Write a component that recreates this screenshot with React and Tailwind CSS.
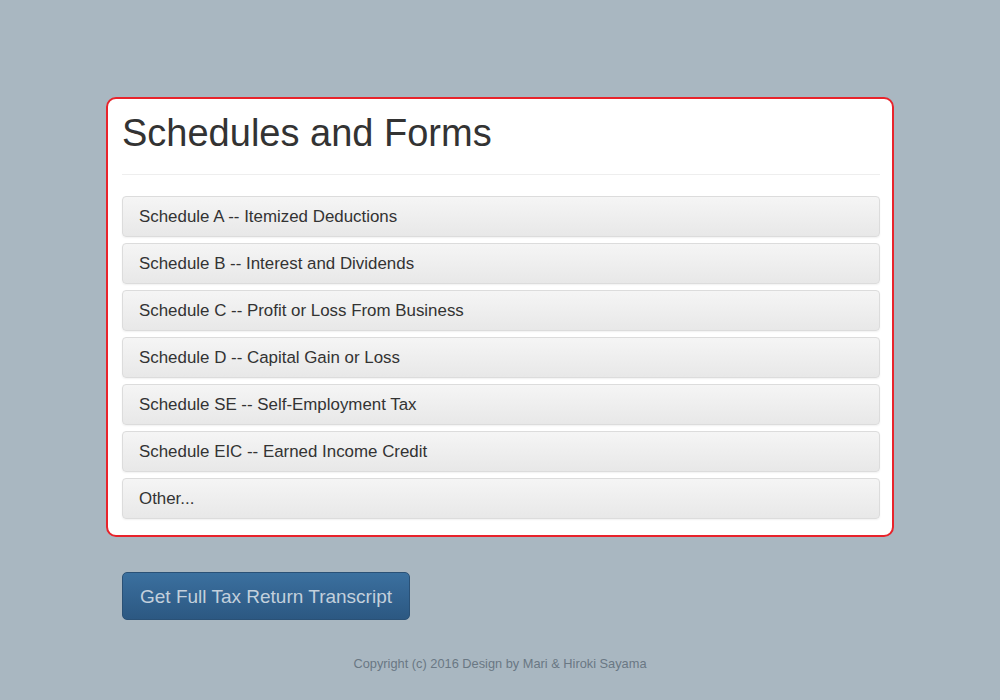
export default function App() {
  const items = [
    "Schedule A -- Itemized Deductions",
    "Schedule B -- Interest and Dividends",
    "Schedule C -- Profit or Loss From Business",
    "Schedule D -- Capital Gain or Loss",
    "Schedule SE -- Self-Employment Tax",
    "Schedule EIC -- Earned Income Credit",
    "Other...",
  ];
  return (
    <div
      className="min-h-[700px] w-full bg-[#a9b7c1] pt-[97px]"
      style={{ fontFamily: '"Liberation Sans", Arial, sans-serif' }}
    >
      <div className="mx-auto w-[788px]">
        <div className="rounded-[10px] border-2 border-[#e8232b] bg-white pl-[14px] pr-[12px] pt-[13px] pb-[16px]">
          <h1 className="text-[38px] leading-[42px] text-[#333333]">Schedules and Forms</h1>
          <div className="mt-[20px] h-px bg-[#eeeeee]" />
          <div className="mt-[21px] flex flex-col gap-[6px]">
            {items.map((t) => (
              <div
                key={t}
                className="flex h-[41px] items-center rounded-[4px] border border-[#dcdcdc] bg-gradient-to-b from-[#f5f5f5] to-[#e8e8e8] pl-[16px] text-[16.9px] text-[#333333] shadow-[0_1px_2px_rgba(0,0,0,0.06)]"
              >
                {t}
              </div>
            ))}
          </div>
        </div>
        <div className="mt-[35px] pl-[16px]">
          <button className="flex h-[48px] w-[288px] items-center justify-center rounded-[5px] border border-[#2a5176] bg-gradient-to-b from-[#3b709f] to-[#2c5882] pt-[3px] text-[19px] text-[#c3d0dc]">
            Get Full Tax Return Transcript
          </button>
        </div>
        <div className="mt-[34px] text-center text-[12.8px] text-[#6a7884]">
          Copyright (c) 2016 Design by Mari &amp; Hiroki Sayama
        </div>
      </div>
    </div>
  );
}
